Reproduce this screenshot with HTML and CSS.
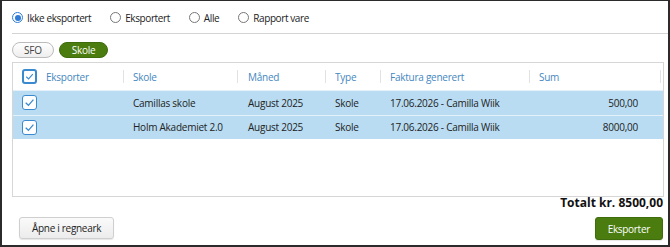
FILE: index.html
```html
<!DOCTYPE html>
<html>
<head>
<meta charset="utf-8">
<link rel="stylesheet" href="styles.css">
</head>
<body>
<div class="frame">
  <div class="radios">
    <label class="radio"><span class="dot on"></span>Ikke eksportert</label>
    <label class="radio"><span class="dot"></span>Eksportert</label>
    <label class="radio"><span class="dot"></span>Alle</label>
    <label class="radio"><span class="dot"></span>Rapport vare</label>
  </div>
  <div class="rule"></div>
  <div class="pills">
    <span class="pill">SFO</span>
    <span class="pill active">Skole</span>
  </div>
  <div class="grid">
    <div class="row head">
      <div class="c c1"><span class="cb"><svg viewBox="0 0 12 12"><path d="M2.5 6.3 L5 8.6 L9.6 3.4" fill="none" stroke="#3a8ad0" stroke-width="1.2"/></svg></span><span class="h">Eksporter</span></div>
      <div class="c c2"><span class="h">Skole</span></div>
      <div class="c c3"><span class="h">Måned</span></div>
      <div class="c c4"><span class="h">Type</span></div>
      <div class="c c5"><span class="h">Faktura generert</span></div>
      <div class="c c6"><span class="h">Sum</span></div>
    </div>
    <div class="row sel">
      <div class="c c1"><span class="cb"><svg viewBox="0 0 12 12"><path d="M2.5 6.3 L5 8.6 L9.6 3.4" fill="none" stroke="#3a8ad0" stroke-width="1.2"/></svg></span></div>
      <div class="c c2">Camillas skole</div>
      <div class="c c3">August 2025</div>
      <div class="c c4">Skole</div>
      <div class="c c5">17.06.2026 - Camilla Wiik</div>
      <div class="c c6 num">500,00</div>
    </div>
    <div class="row sel">
      <div class="c c1"><span class="cb"><svg viewBox="0 0 12 12"><path d="M2.5 6.3 L5 8.6 L9.6 3.4" fill="none" stroke="#3a8ad0" stroke-width="1.2"/></svg></span></div>
      <div class="c c2">Holm Akademiet 2.0</div>
      <div class="c c3">August 2025</div>
      <div class="c c4">Skole</div>
      <div class="c c5">17.06.2026 - Camilla Wiik</div>
      <div class="c c6 num">8000,00</div>
    </div>
  </div>
  <div class="total">Totalt kr. 8500,00</div>
  <div class="actions">
    <button class="btn">Åpne i regneark</button>
    <button class="btn primary">Eksporter</button>
  </div>
</div>
</body>
</html>
```
FILE: styles.css
```css
* { box-sizing: border-box; }
html, body { margin: 0; padding: 0; background: #2b2b2b; }
body { width: 670px; height: 247px; overflow: hidden; font-family: "Open Sans", "Liberation Sans", sans-serif; font-size: 10px; letter-spacing: -0.25px; color: #222; }
.frame {
  margin: 1px 2px 0 2px;
  height: 244px;
  background: #fff;
  padding: 0 0 0 10px;
  display: flex;
  flex-direction: column;
}
.radios { display: flex; align-items: center; height: 32px; padding-top: 1px; }
.radio { display: flex; align-items: center; margin-right: 19px; white-space: nowrap; letter-spacing: -0.4px; }
.dot { width: 11px; height: 11px; border: 1px solid #777; border-radius: 50%; margin-right: 4px; background: #fff; position: relative; }
.dot.on { border-color: #2f7bd6; }
.dot.on::after { content: ""; position: absolute; left: 1.5px; top: 1.5px; width: 6px; height: 6px; border-radius: 50%; background: #2f7bd6; }
.rule { height: 1px; background: #d4d4d4; }
.pills { display: flex; gap: 5px; padding: 8px 0 4px 0; }
.pill { height: 16px; line-height: 14px; border: 1px solid #bbb; border-radius: 8px; padding: 0 11px; background: linear-gradient(#fff, #eee); color: #444; }
.pill.active { background: #4a7c10; border-color: #3f6c0c; color: #fff; padding: 0 12px; }
.grid { border: 1px solid #d6d6d6; margin-right: 4px; height: 135px; }
.row { display: flex; height: 24.5px; align-items: center; }
.row.head { height: 27px; background: #fff; }
.row.sel { background: #b9dcf2; border-top: 1px solid #e4f1fa; }
.c { display: flex; align-items: center; height: 100%; white-space: nowrap; }
.head .c { position: relative; }
.head .c:not(.c1)::before { content: ""; position: absolute; left: 0; top: 7px; bottom: 7px; width: 1px; background: #e2e2e2; }
.head .c6::after { content: ""; position: absolute; right: 0; top: 7px; bottom: 7px; width: 1px; background: #e2e2e2; }
.c1 { width: 110px; padding-left: 9px; }
.c2 { width: 114px; padding-left: 10px; }
.c3 { width: 88px; padding-left: 11px; }
.c4 { width: 55px; padding-left: 10px; }
.c5 { width: 149px; padding-left: 10px; }
.c6 { width: 132px; padding-left: 10px; }
.num { justify-content: flex-end; padding-right: 23px; }
.h { color: #4587c0; }
.cb { width: 15px; height: 15px; border: 1px solid #3a8ad0; border-radius: 3px; background: #fff; display: inline-flex; margin-right: 9px; }
.head .cb { border-width: 2px; }
.cb svg { width: 100%; height: 100%; }
.total { text-align: right; font-weight: 700; font-size: 12px; letter-spacing: 0; padding-right: 5px; margin-top: -1px; line-height: 14px; color: #111; }
.actions { display: flex; justify-content: space-between; padding: 7px 5px 0 7px; }
.btn { font-family: inherit; font-size: 10px; letter-spacing: -0.3px; height: 22px; border-radius: 3px; border: 1px solid #cfcfcf; background: linear-gradient(#fafafa, #ececec); color: #222; padding: 0 12px; box-shadow: 0 1px 1px rgba(0,0,0,0.1); }
.btn.primary { background: #4a7c10; border-color: #3f6c0c; color: #fff; padding: 0 12px; height: 23px; }
```
